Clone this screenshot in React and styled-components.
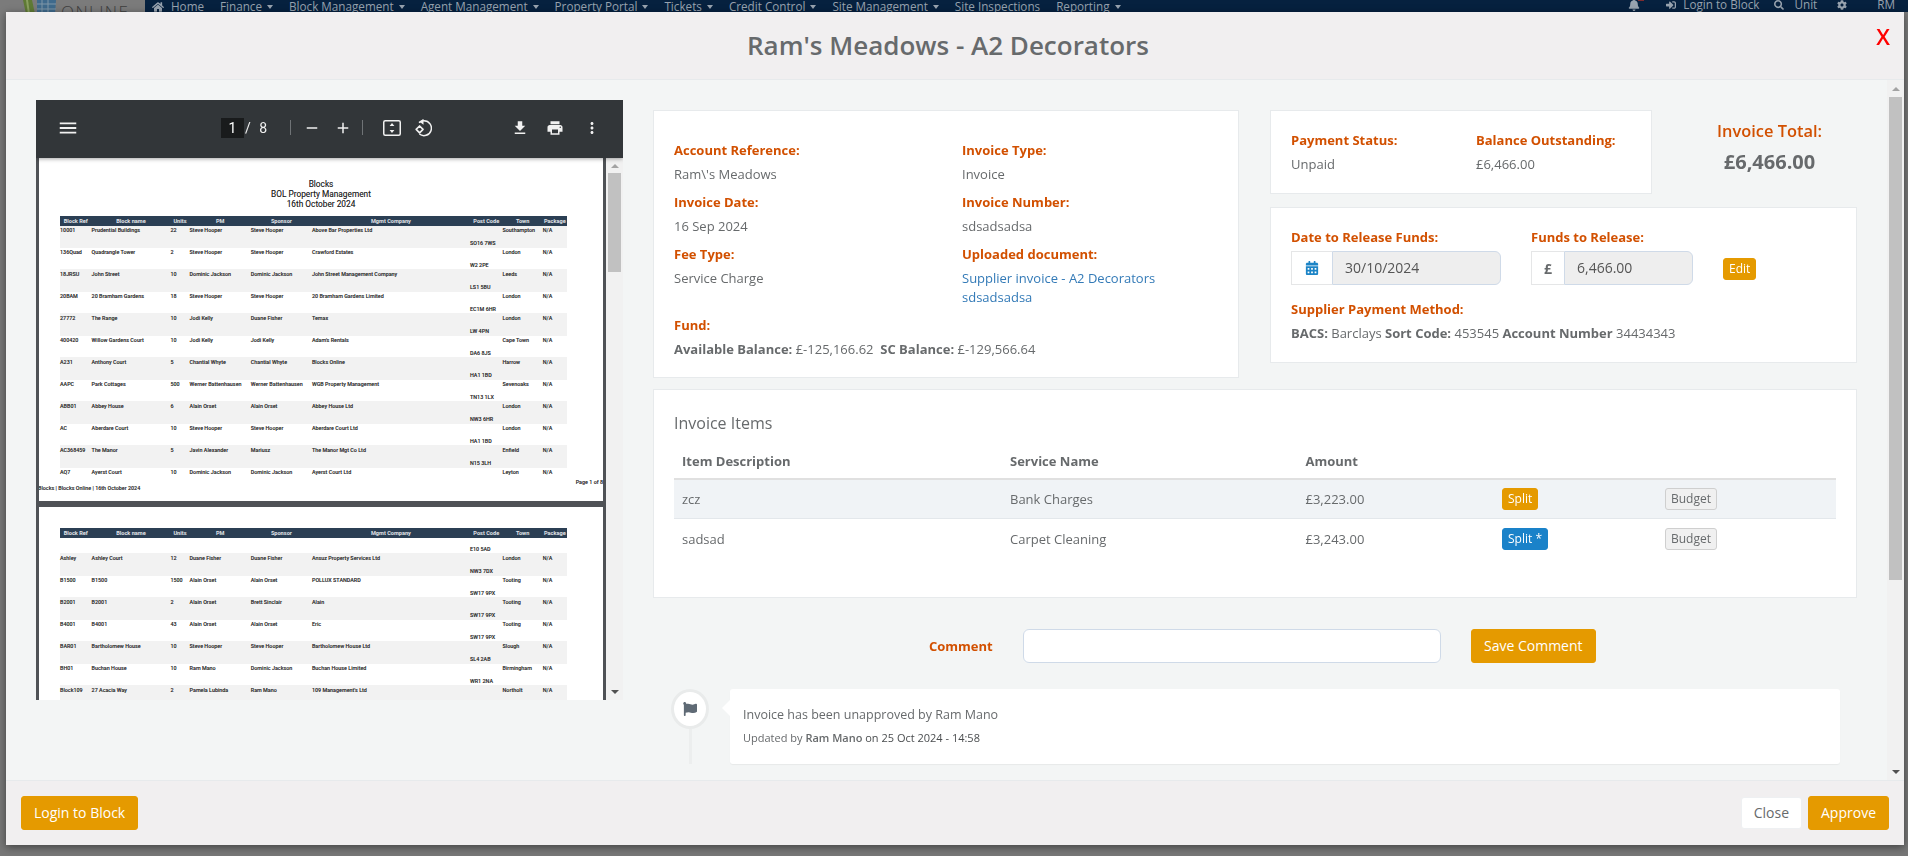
import React from "react";
import styled, { createGlobalStyle } from "styled-components";
import { FaHome, FaBell, FaSignInAlt, FaSearch, FaCog, FaCalendarAlt, FaFlag } from "react-icons/fa";
import { MdMenu, MdFileDownload, MdPrint, MdMoreVert, MdRemove, MdAdd } from "react-icons/md";

const Global = createGlobalStyle`
  html, body { margin: 0; padding: 0; height: 100%; overflow: hidden; background: #777; }
  body { font-family: "Open Sans", "Liberation Sans", sans-serif; font-size: 13px; color: #676a6c; }
  * { box-sizing: border-box; }
`;

const ORANGE = "#e59a00";
const LABEL = "#d25000";

/* page behind the dialog */
const PageBar = styled.header`
  display: flex; height: 40px; background: #7b7b7b;
`;
const LogoArea = styled.div`
  width: 145px; flex: none; display: flex; align-items: flex-start; padding-left: 23px;
`;
const LogoText = styled.span`
  margin-left: 5px; font-size: 17px; letter-spacing: 1.4px; line-height: 24px; color: #3f3f3f; font-weight: 300;
`;
const NavBar = styled.nav`
  flex: 1; background: #06213f; height: 12px; padding-left: 7px; display: flex; gap: 16px;
  font-size: 11.7px; line-height: 13px; color: #98a3af; white-space: nowrap;
`;
const NavItem = styled.span`
  display: inline-flex; align-items: center; height: 13px;
  svg { margin-right: 7px; }
`;
const Caret = styled.i`
  display: inline-block; margin-left: 5px; margin-top: 1px; width: 0; height: 0;
  border-left: 3.5px solid transparent; border-right: 3.5px solid transparent; border-top: 4px solid #98a3af;
`;
const NavRight = styled.div`
  margin-left: auto; display: flex; height: 9px; align-items: center; line-height: 9px;
`;
const NavRightItem = styled.span`
  display: inline-flex; align-items: center; margin-left: ${p => p.$ml}px; svg { margin-right: ${p => p.$ir || 0}px; }
`;
const BellWrap = styled.span`
  position: relative; display: inline-flex;
  &::after { content: ""; position: absolute; right: -4px; top: 0; width: 6px; height: 2px; background: #7c2b30; }
`;

/* dialog */
const Overlay = styled.div`
  position: fixed; inset: 0; padding: 12px 4px 11px 6px; display: flex;
`;
const Dialog = styled.section`
  flex: 1; display: flex; flex-direction: column; background: #f3f5f5;
  box-shadow: 0 2px 8px rgba(0,0,0,.45); min-width: 0;
`;
const Head = styled.div`
  position: relative; height: 68px; flex: none; background: #f1eff0; border-bottom: 1px solid #e7eaec;
  display: flex; align-items: center; justify-content: center; padding: 0 14px 2px 0;
`;
const Title = styled.h4`
  margin: 0; font-size: 26px; font-weight: 600; color: #676a6c; line-height: 30px;
`;
const CloseX = styled.span`
  position: absolute; right: 14px; top: 10px; font-size: 22px; line-height: 28px; font-weight: 600; color: #f00;
`;
const Body = styled.div`
  flex: 1; display: flex; min-height: 0; overflow: hidden;
`;
const Content = styled.div`
  flex: 1; min-width: 0; padding: 20px 30px 0; display: flex; gap: 30px; overflow: hidden;
`;
const Foot = styled.div`
  flex: none; height: 65px; background: #f1eff0; border-top: 1px solid #e7eaec;
  display: flex; align-items: center; padding: 0 15px; 
`;
const Btn = styled.button`
  font: inherit; font-size: 14px; height: 34px; border-radius: 3px; padding: 0 ${p => p.$px || 12}px; cursor: pointer;
  border: 1px solid ${ORANGE}; background: ${ORANGE}; color: #fff; line-height: 20px; white-space: nowrap;
`;
const CloseBtn = styled(Btn)`
  margin-left: auto; margin-right: 6px; height: 32px; padding: 0 12px; background: #fff; color: #676a6c; border-color: #eef0f2;
`;
const SmallBtn = styled.button`
  font: inherit; font-size: 12px; height: 22px; line-height: 18px; border-radius: 3px; padding: 0 ${p => p.$px || 5}px; cursor: pointer;
  border: 1px solid ${p => p.$bg === "blue" ? "#1a82c9" : p.$bg === "grey" ? "#cfcfcf" : ORANGE};
  background: ${p => p.$bg === "blue" ? "#1a82c9" : p.$bg === "grey" ? "#f0f0f0" : ORANGE};
  color: ${p => p.$bg === "grey" ? "#676a6c" : "#fff"};
`;

/* scrollbars */
const Track = styled.div`
  flex: none; width: 17px; background: #f1f1f1; display: flex; flex-direction: column; align-items: center;
`;
const TrackBtn = styled.div`
  flex: none; height: ${p => p.$h}px; display: flex; align-items: center; justify-content: center;
  &::before { content: ""; width: 0; height: 0; border-left: 4px solid transparent; border-right: 4px solid transparent;
    ${p => p.$up ? "border-bottom: 4px solid #a3a3a3;" : "border-top: 4px solid #505050;"} }
`;
const Thumb = styled.div`
  flex: none; width: 13px; height: ${p => p.$h}px; background: #c1c1c1; margin-bottom: auto;
`;

/* pdf viewer */
const Viewer = styled.div`
  flex: none; width: 587px; height: 600px; display: flex; flex-direction: column; overflow: hidden;
`;
const Toolbar = styled.div`
  position: relative; z-index: 1; flex: none; height: 58px; background: #323639; color: #f1f1f1; display: flex; align-items: center; padding: 0 0 0 24px;
  box-shadow: 0 1px 4px rgba(0,0,0,.35); padding-bottom: 3px;
`;
const ToolIcon = styled.span`
  display: inline-flex; align-items: center; justify-content: center; width: ${p => p.$w || 18}px; margin-left: ${p => p.$ml || 0}px; flex: none;
`;
const MenuIcon = styled(MdMenu)`
  flex: none; margin-left: -3px;
`;
const PageBox = styled.span`
  flex: none; margin-left: 142px; width: 23px; height: 20px; background: #191b1c; color: #fff; display: flex; align-items: center; justify-content: center;
  font: 14px "Roboto", sans-serif;
`;
const PageTotal = styled.span`
  flex: none; margin-left: 1px; width: 30px; font: 14px "Roboto", sans-serif; word-spacing: 5px; white-space: pre;
`;
const Sep = styled.span`
  flex: none; width: 1px; height: 15px; background: #6f7376; margin-left: ${p => p.$ml}px;
`;
const ViewerBody = styled.div`
  flex: 1; min-height: 0; display: flex;
`;
const Pages = styled.div`
  flex: 1; min-width: 0; background: #4f5256; padding: 0 3px; overflow: hidden; display: flex; flex-direction: column; gap: 6px;
`;
const Sheet = styled.div`
  flex: none; height: ${p => p.$h}px; background: #fff; padding: ${p => p.$pt}px 0 0; overflow: hidden;
  font-family: "Roboto", sans-serif; color: #222;
`;
const SheetTitles = styled.div`
  text-align: center; font-size: 8.3px; line-height: 10px; color: #222; margin-bottom: 7px;
  text-shadow: 0 0 .4px rgba(0,0,0,.4);
`;
const PdfTable = styled.div`
  margin-left: 21px; width: 507px;
`;
const COLS = "31.6px 78.8px 19.2px 61.2px 61.2px 158px 32.6px 40.2px 24.2px";
const PdfHead = styled.div`
  position: relative; display: grid; grid-template-columns: ${COLS}; height: 10px; background: #2b3f54; color: #e3e6ea;
  font-size: 5.6px; font-weight: 700; line-height: 10px; white-space: nowrap;
  span { text-align: center; }
`;
const PdfRow = styled.div`
  display: grid; grid-template-columns: ${COLS}; height: ${p => p.$h || 22}px; font-size: 5.4px; font-weight: 500; line-height: 8px; white-space: nowrap; color: #333;
  text-shadow: 0 0 .5px rgba(0,0,0,.4);
  ${p => p.$tint ? "background: #f2f2f2; box-shadow: 0 -1px 0 #f2f2f2;" : ""}
`;
const PdfCell = styled.span`
  padding-top: ${p => p.$pt || 0}px; overflow: visible;
`;
const SheetFoot = styled.div`
  display: grid; grid-template-columns: 536.7px auto; font-size: 5.4px; font-weight: 500; line-height: 8px; white-space: nowrap; color: #333;
  text-shadow: 0 0 .5px rgba(0,0,0,.4);
`;
const FootText = styled.span`
  margin-top: ${p => p.$mt || 0}px; margin-left: ${p => p.$ml || 0}px;
`;

/* right column */
const Main = styled.div`
  flex: none; width: 1204px; padding-top: 10px;
`;
const TopGrid = styled.div`
  display: grid; grid-template-columns: 586px 587px; gap: 31px; align-items: start;
`;
const Card = styled.div`
  background: #fff; border: 1px solid #e7eaec;
`;
const AccountCard = styled(Card)`
  height: 268px; padding: 29px 20px 0; display: grid; grid-template-columns: 288px 1fr; align-content: start;
`;
const Field = styled.div`
  grid-column: ${p => p.$span ? "1 / -1" : "auto"}; margin-bottom: 8px;
`;
const Label = styled.div`
  font-weight: 700; color: ${LABEL}; line-height: 20px; margin-bottom: 4px; white-space: nowrap;
`;
const Value = styled.div`
  line-height: 20px; white-space: nowrap;
`;
const LinkLine = styled(Value)`
  line-height: 19px;
`;
const Link = styled.a`
  color: #337ab7; text-decoration: none;
`;
const Stack = styled.div`
  display: flex; flex-direction: column; gap: 13px;
`;
const PayRow = styled.div`
  display: flex;
`;
const PayCard = styled(Card)`
  width: 382px; height: 84px; padding: 19px 20px; display: grid; grid-template-columns: 185px 1fr;
`;
const Total = styled.div`
  flex: none; width: 175px; margin-left: 30px; padding-top: 10px; text-align: center;
`;
const TotalLabel = styled.div`
  font-size: 16.4px; font-weight: 600; color: ${LABEL}; line-height: 22px; margin-bottom: 8px;
`;
const TotalValue = styled.div`
  font-size: 20px; font-weight: 700; color: #676a6c; line-height: 24px;
`;
const ReleaseCard = styled(Card)`
  height: 156px; padding: 19px 20px;
`;
const ReleaseRow = styled.div`
  display: flex; gap: 30.5px; align-items: flex-end; margin-bottom: 14px;
`;
const InputGroup = styled.div`
  display: flex; width: ${p => p.$w}px; height: 34px;
`;
const Addon = styled.span`
  flex: none; width: ${p => p.$w}px; display: flex; align-items: center; justify-content: center; background: #fff;
  border: 1px solid #e5e6e7; border-right: 0; color: #1c84c6; font-size: 14px;
`;
const Pound = styled.b`
  color: #676a6c; font-size: 14px;
`;
const ReadOnly = styled.div`
  flex: 1; background: #eee; border: 1px solid #cfdae8; border-radius: 0 6px 6px 0; font-size: 14px; line-height: 32px; padding-left: 12px; color: #555;
`;
const EditWrap = styled.div`
  height: 34px; display: flex; align-items: center; padding-top: 2px;
`;
const ItemsCard = styled(Card)`
  margin-top: 11px; height: 209px; padding: 22px 20px 0;
`;
const ItemsTitle = styled.h5`
  margin: 0 0 10px; font-size: 16px; font-weight: 400; color: #676a6c; line-height: 22px;
`;
const ICOLS = "328px 295.5px 196.5px 163px 1fr";
const ItemsHead = styled.div`
  display: grid; grid-template-columns: ${ICOLS}; padding: 0 8px; height: 36px; align-items: center; font-weight: 700; border-bottom: 2px solid #e0e0e0;
`;
const ItemRow = styled.div`
  display: grid; grid-template-columns: ${ICOLS}; padding: 0 8px; height: ${p => p.$h}px; align-items: center;
  ${p => p.$tint ? "background: #f0f3f6; border-bottom: 1px solid #e3e7eb;" : ""}
`;
const CellBtn = styled.div`
  display: flex;
`;
const CommentRow = styled.div`
  margin-top: 31px; padding-left: 276px; display: flex; align-items: center; gap: 30px;
`;
const CommentLabel = styled.label`
  width: 64px; flex: none; font-weight: 700; color: ${LABEL}; white-space: nowrap;
`;
const CommentInput = styled.input`
  flex: none; width: 418px; height: 34px; border: 1px solid #cfdae8; border-radius: 6px; background: #fff; outline: none;
`;
const Timeline = styled.div`
  margin-top: 26px; padding-left: 18px; display: flex; padding-bottom: 30px;
`;
const Marker = styled.div`
  flex: none; width: 38px; display: flex; flex-direction: column; align-items: center;
`;
const Circle = styled.div`
  flex: none; width: 38px; height: 40px; border-radius: 50%; background: #fff; border: 3px solid #e9ebeb; display: flex; justify-content: center; padding-top: 10px;
  color: #5f6a75; font-size: 14px;
`;
const Stem = styled.div`
  flex: 1; width: 3px; background: #eceeee;
`;
const Panel = styled.div`
  position: relative; flex: none; width: 1110px; height: 75px; margin-left: 21px; background: #fff; border-radius: 3px; padding: 16px 13px 0;
  box-shadow: 0 1px 1px rgba(0,0,0,.05);
  &::before { content: ""; position: absolute; left: -8px; top: 11px; border-top: 8px solid transparent; border-bottom: 8px solid transparent; border-right: 8px solid #fff; }
`;
const PanelText = styled.div`
  font-size: 12.5px; line-height: 20px; white-space: nowrap; margin-bottom: 3px;
`;
const PanelMeta = styled.div`
  font-size: 11px; line-height: 20px; white-space: nowrap; b { font-weight: 600; }
`;
const PanelDate = styled.span`
  color: #4a4d4f;
`;

const nav = ["Finance", "Block Management", "Agent Management", "Property Portal", "Tickets", "Credit Control", "Site Management"];

const page1 = [
  ["10001", "Prudential Buildings", "22", "Steve Hooper", "Steve Hooper", "Above Bar Properties Ltd", "SO16 7WS", "Southampton"],
  ["136Quad", "Quadrangle Tower", "2", "Steve Hooper", "Steve Hooper", "Crawford Estates", "W2 2PE", "London"],
  ["18JRSU", "John Street", "10", "Dominic Jackson", "Dominic Jackson", "John Street Management Company", "LS1 5BU", "Leeds"],
  ["20BAM", "20 Bramham Gardens", "18", "Steve Hooper", "Steve Hooper", "20 Bramham Gardens Limited", "EC1M 6HR", "London"],
  ["27772", "The Range", "10", "Jodi Kelly", "Duane Fisher", "Temax", "LW 4PN", "London"],
  ["400420", "Willow Gardens Court", "10", "Jodi Kelly", "Jodi Kelly", "Adam's Rentals", "DA6 8JS", "Cape Town"],
  ["A231", "Anthony Court", "5", "Chantial Whyte", "Chantial Whyte", "Blocks Online", "HA1 1BD", "Harrow"],
  ["AAPC", "Park Cottages", "500", "Werner Battenhausen", "Werner Battenhausen", "WGB Property Management", "TN13 1LX", "Sevenoaks"],
  ["ABB01", "Abbey House", "6", "Alain Orset", "Alain Orset", "Abbey House Ltd", "NW3 6HR", "London"],
  ["AC", "Aberdare Court", "10", "Steve Hooper", "Steve Hooper", "Aberdare Court Ltd", "HA1 1BD", "London"],
  ["AC368459", "The Manor", "5", "Javin Alexander", "Mariusz", "The Manor Mgt Co Ltd", "N15 3LH", "Enfield"],
  ["AQ7", "Ayerst Court", "10", "Dominic Jackson", "Dominic Jackson", "Ayerst Court Ltd", "", "Leyton"],
];
const page2 = [
  ["Ashley", "Ashley Court", "12", "Duane Fisher", "Duane Fisher", "Ansuz Property Services Ltd", "NW3 7DX", "London"],
  ["B1500", "B1500", "1500", "Alain Orset", "Alain Orset", "POLLUX STANDARD", "SW17 9PX", "Tooting"],
  ["B2001", "B2001", "2", "Alain Orset", "Brett Sinclair", "Alain", "SW17 9PX", "Tooting"],
  ["B4001", "B4001", "43", "Alain Orset", "Alain Orset", "Eric", "SW17 9PX", "Tooting"],
  ["BAR01", "Bartholomew House", "10", "Steve Hooper", "Steve Hooper", "Bartholomew House Ltd", "SL4 2AB", "Slough"],
  ["BH01", "Buchan House", "10", "Ram Mano", "Dominic Jackson", "Buchan House Limited", "WR1 2NA", "Birmingham"],
  ["Block109", "27 Acacia Way", "2", "Pamela Lubinda", "Ram Mano", "109 Management's Ltd", "", "Northolt"],
];
const headers = ["Block Ref", "Block name", "Units", "PM", "Sponsor", "Mgmt Company", "Post Code", "Town", "Package"];

const TableHead = () => (
  <PdfHead>{headers.map(h => <span key={h}>{h}</span>)}</PdfHead>
);

const Row = ({ r, tint, h }) => (
  <PdfRow $tint={tint} $h={h}>
    {r.slice(0, 6).map((c, i) => <PdfCell key={i}>{c}</PdfCell>)}
    <PdfCell $pt={13}>{r[6]}</PdfCell>
    <PdfCell>{r[7]}</PdfCell>
    <PdfCell>N/A</PdfCell>
  </PdfRow>
);

const FitIcon = () => (
  <svg width="18" height="16" viewBox="0 0 18 16" fill="none">
    <rect x="0.75" y="0.75" width="16.5" height="14.5" rx="1.5" stroke="#f1f1f1" strokeWidth="1.5" />
    <path d="M9 3l2.4 3H6.6zM9 13l-2.4-3h4.8z" fill="#f1f1f1" />
  </svg>
);
const RotateIcon = () => (
  <svg width="18" height="18" viewBox="0 0 18 18" fill="none">
    <path d="M7 9.5l-3-3-3 3 3 3z" transform="translate(1 -0.5) scale(1.15)" stroke="#f1f1f1" strokeWidth="1.4" strokeLinejoin="round" />
    <path d="M5 3.6A7.4 7.4 0 0 1 10 1.8a7.4 7.4 0 1 1-4.6 13.2" stroke="#f1f1f1" strokeWidth="1.5" />
    <path d="M10.5 0l-4 3 4 3z" fill="#f1f1f1" transform="translate(-1 -0.3)" />
  </svg>
);

export default function App() {
  return (
    <>
      <Global />
      <PageBar>
        <LogoArea>
          <svg width="33" height="14" viewBox="0 0 33 14">
            <path d="M0 0h9l3 14H3z" fill="#5f7a35" />
            <path d="M3 0h2l2 14H5z" fill="#8aa060" />
            <path d="M14 0h19l-1 14H14z" fill="#3f6a8c" />
            <path d="M19 0v14M25 0v14M14 4h19M14 9h19" stroke="#8097a8" strokeWidth="1" />
          </svg>
          <LogoText>ONLINE</LogoText>
        </LogoArea>
        <NavBar>
          <NavItem><FaHome size={12} />Home</NavItem>
          {nav.map(n => <NavItem key={n}>{n}<Caret /></NavItem>)}
          <NavItem>Site Inspections</NavItem>
          <NavItem>Reporting<Caret /></NavItem>
          <NavRight>
            <BellWrap><FaBell size={12} /></BellWrap>
            <NavRightItem $ml={26} $ir={7}><FaSignInAlt size={10} />Login to Block</NavRightItem>
            <NavRightItem $ml={15} $ir={10}><FaSearch size={10} />Unit</NavRightItem>
            <NavRightItem $ml={20}><FaCog size={10} /></NavRightItem>
            <NavRightItem $ml={30}>RM</NavRightItem>
            <NavRightItem $ml={13} />
          </NavRight>
        </NavBar>
      </PageBar>

      <Overlay>
        <Dialog>
          <Head>
            <Title>Ram's Meadows - A2 Decorators</Title>
            <CloseX>X</CloseX>
          </Head>
          <Body>
            <Content>
              <Viewer>
                <Toolbar>
                  <MenuIcon size={22} />
                  <PageBox>1</PageBox>
                  <PageTotal>/ 8</PageTotal>
                  <Sep $ml={15} />
                  <ToolIcon $ml={12}><MdRemove size={20} /></ToolIcon>
                  <ToolIcon $ml={13}><MdAdd size={20} /></ToolIcon>
                  <Sep $ml={9.5} />
                  <ToolIcon $ml={20.5}><FitIcon /></ToolIcon>
                  <ToolIcon $ml={13}><RotateIcon /></ToolIcon>
                  <ToolIcon $ml={79}><MdFileDownload size={20} /></ToolIcon>
                  <ToolIcon $ml={17}><MdPrint size={22} /></ToolIcon>
                  <ToolIcon $ml={18.5}><MdMoreVert size={22} /></ToolIcon>
                </Toolbar>
                <ViewerBody>
                  <Pages>
                    <Sheet $h={343} $pt={21}>
                      <SheetTitles>
                        <div>Blocks</div>
                        <div>BOL Property Management</div>
                        <div>16th October 2024</div>
                      </SheetTitles>
                      <PdfTable>
                        <TableHead />
                        {page1.map((r, i) => <Row key={r[0]} r={r} tint={i % 2 === 0} h={i === 11 ? 10 : 22} />)}
                      </PdfTable>
                      <SheetFoot>
                        <FootText $mt={6} $ml={-1}>Blocks | Blocks Online | 16th October 2024</FootText>
                        <FootText>Page 1 of 8</FootText>
                      </SheetFoot>
                    </Sheet>
                    <Sheet $h={200} $pt={21}>
                      <PdfTable>
                        <TableHead />
                        <PdfRow $h={16}>
                          <PdfCell /><PdfCell /><PdfCell /><PdfCell /><PdfCell /><PdfCell />
                          <PdfCell $pt={7}>E10 5AD</PdfCell>
                        </PdfRow>
                        {page2.map((r, i) => <Row key={r[0]} r={r} tint={i % 2 === 0} />)}
                      </PdfTable>
                    </Sheet>
                  </Pages>
                  <Track>
                    <TrackBtn $up $h={15} />
                    <Thumb $h={99} />
                    <TrackBtn $h={17} />
                  </Track>
                </ViewerBody>
              </Viewer>

              <Main>
                <TopGrid>
                  <AccountCard>
                    <Field><Label>Account Reference:</Label><Value>Ram\'s Meadows</Value></Field>
                    <Field><Label>Invoice Type:</Label><Value>Invoice</Value></Field>
                    <Field><Label>Invoice Date:</Label><Value>16 Sep 2024</Value></Field>
                    <Field><Label>Invoice Number:</Label><Value>sdsadsadsa</Value></Field>
                    <Field><Label>Fee Type:</Label><Value>Service Charge</Value></Field>
                    <Field>
                      <Label>Uploaded document:</Label>
                      <Value><Link>Supplier invoice - A2 Decorators</Link></Value>
                      <LinkLine><Link>sdsadsadsa</Link></LinkLine>
                    </Field>
                    <Field $span>
                      <Label>Fund:</Label>
                      <Value><b>Available Balance:</b> £-125,166.62 &nbsp;<b>SC Balance:</b> £-129,566.64</Value>
                    </Field>
                  </AccountCard>
                  <Stack>
                    <PayRow>
                      <PayCard>
                        <div><Label>Payment Status:</Label><Value>Unpaid</Value></div>
                        <div><Label>Balance Outstanding:</Label><Value>£6,466.00</Value></div>
                      </PayCard>
                      <Total>
                        <TotalLabel>Invoice Total:</TotalLabel>
                        <TotalValue>£6,466.00</TotalValue>
                      </Total>
                    </PayRow>
                    <ReleaseCard>
                      <ReleaseRow>
                        <div>
                          <Label>Date to Release Funds:</Label>
                          <InputGroup $w={209.5}>
                            <Addon $w={41}><FaCalendarAlt /></Addon>
                            <ReadOnly>30/10/2024</ReadOnly>
                          </InputGroup>
                        </div>
                        <div>
                          <Label>Funds to Release:</Label>
                          <InputGroup $w={161.5}>
                            <Addon $w={33}><Pound>£</Pound></Addon>
                            <ReadOnly>6,466.00</ReadOnly>
                          </InputGroup>
                        </div>
                        <EditWrap><SmallBtn>Edit</SmallBtn></EditWrap>
                      </ReleaseRow>
                      <Label>Supplier Payment Method:</Label>
                      <Value><b>BACS:</b> Barclays <b>Sort Code:</b> 453545 <b>Account Number</b> 34434343</Value>
                    </ReleaseCard>
                  </Stack>
                </TopGrid>

                <ItemsCard>
                  <ItemsTitle>Invoice Items</ItemsTitle>
                  <ItemsHead>
                    <span>Item Description</span><span>Service Name</span><span>Amount</span>
                  </ItemsHead>
                  <ItemRow $tint $h={39}>
                    <span>zcz</span><span>Bank Charges</span><span>£3,223.00</span>
                    <CellBtn><SmallBtn>Split</SmallBtn></CellBtn>
                    <CellBtn><SmallBtn $bg="grey">Budget</SmallBtn></CellBtn>
                  </ItemRow>
                  <ItemRow $h={40}>
                    <span>sadsad</span><span>Carpet Cleaning</span><span>£3,243.00</span>
                    <CellBtn><SmallBtn $bg="blue">Split *</SmallBtn></CellBtn>
                    <CellBtn><SmallBtn $bg="grey">Budget</SmallBtn></CellBtn>
                  </ItemRow>
                </ItemsCard>

                <CommentRow>
                  <CommentLabel>Comment</CommentLabel>
                  <CommentInput />
                  <Btn>Save Comment</Btn>
                </CommentRow>

                <Timeline>
                  <Marker>
                    <Circle><FaFlag /></Circle>
                    <Stem />
                  </Marker>
                  <Panel>
                    <PanelText>Invoice has been unapproved by Ram Mano</PanelText>
                    <PanelMeta>Updated by <b>Ram Mano</b> <PanelDate>on 25 Oct 2024 - 14:58</PanelDate></PanelMeta>
                  </Panel>
                </Timeline>
              </Main>
            </Content>
            <Track>
              <TrackBtn $up $h={17} />
              <Thumb $h={483} />
              <TrackBtn $h={17} />
            </Track>
          </Body>
          <Foot>
            <Btn>Login to Block</Btn>
            <CloseBtn>Close</CloseBtn>
            <Btn>Approve</Btn>
          </Foot>
        </Dialog>
      </Overlay>
    </>
  );
}
